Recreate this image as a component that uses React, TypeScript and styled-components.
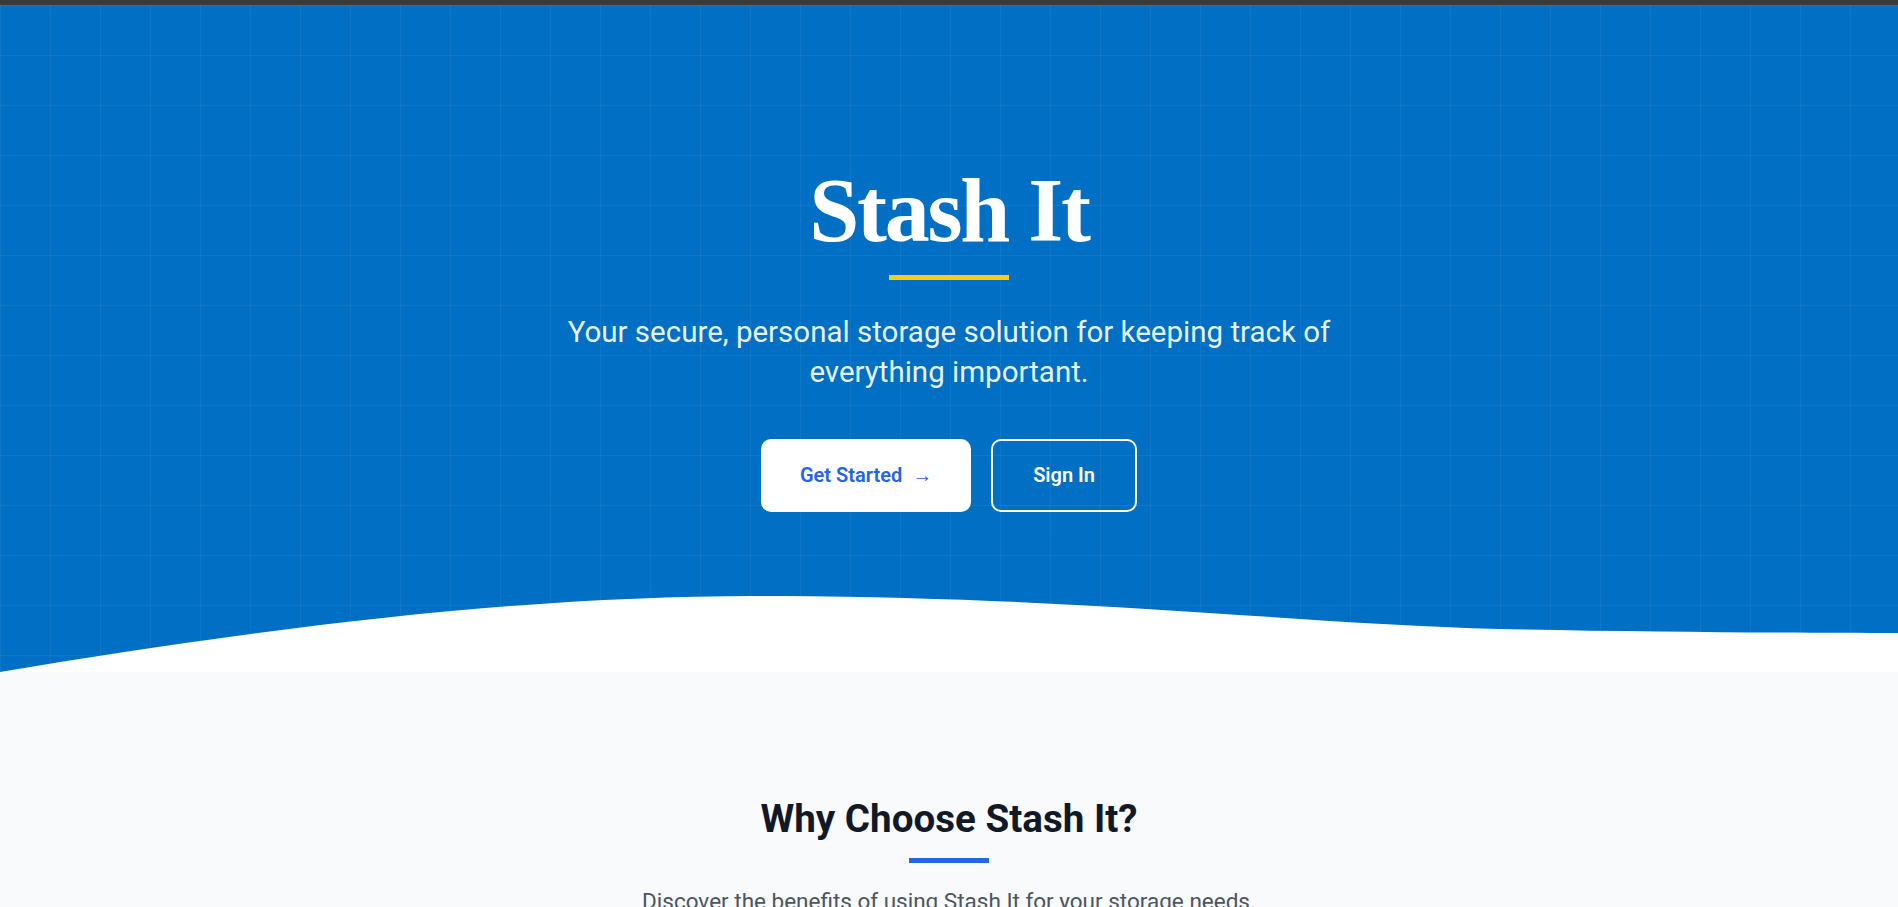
import styled, { createGlobalStyle } from "styled-components"

const GlobalStyle = createGlobalStyle`
    html, body {
        margin: 0;
        padding: 0;
        background: #f9fafb;
        font-family: "Segoe UI", Roboto, "Noto Sans", sans-serif;
    }
    * {
        box-sizing: border-box;
    }
`

const TopBar = styled.div`
    height: 5px;
    background: #3b3b3b;
`

const Hero = styled.section`
    display: flex;
    flex-direction: column;
    align-items: center;
    padding-top: 161px;
    background-color: #016fc4;
    background-image:
        linear-gradient(to right, rgba(255, 255, 255, 0.06) 1px, transparent 1px),
        linear-gradient(to bottom, rgba(255, 255, 255, 0.06) 1px, transparent 1px);
    background-size: 50px 50px;
    color: #fff;
`

const Title = styled.h1`
    margin: 0;
    font-family: "Liberation Serif", "Times New Roman", serif;
    font-weight: 700;
    font-size: 90px;
    line-height: 1;
    letter-spacing: -0.025em;
`

const AccentBar = styled.div<{ $color: string; $width: number }>`
    width: ${p => p.$width}px;
    height: 5px;
    background: ${p => p.$color};
`

const HeroBar = styled(AccentBar)`
    margin-top: 19px;
`

const Tagline = styled.p`
    margin: 32px 0 0 0;
    max-width: 840px;
    text-align: center;
    font-size: 29.5px;
    line-height: 40px;
    color: rgba(255, 255, 255, 0.93);
`

const ButtonRow = styled.div`
    display: flex;
    gap: 20px;
    margin-top: 47px;
`

const BaseButton = styled.a`
    display: inline-flex;
    align-items: center;
    padding: 18px 40px;
    border: 2px solid #fff;
    border-radius: 10px;
    font-size: 20px;
    font-weight: 600;
    line-height: 33px;
    text-decoration: none;
    cursor: pointer;
`

const PrimaryButton = styled(BaseButton)`
    padding: 18px 37px;
    background: #fff;
    color: #2563eb;
`

const OutlineButton = styled(BaseButton)`
    background: transparent;
    color: #fff;
`

const Arrow = styled.span`
    margin-left: 10px;
`

const Wave = styled.svg`
    display: block;
    width: 100%;
    height: 80px;
    margin-top: 80px;
`

const Features = styled.section`
    display: flex;
    flex-direction: column;
    align-items: center;
    padding: 122px 20px 120px;
    background: #f9fafb;
`

const SectionTitle = styled.h2`
    margin: 0;
    font-size: 38.6px;
    font-weight: 700;
    line-height: 50px;
    color: #111827;
`

const SectionBar = styled(AccentBar)`
    margin-top: 14px;
`

const SectionLead = styled.p`
    margin: 22px 0 0 0;
    font-size: 22.5px;
    line-height: 32px;
    color: #4b5563;
    text-align: center;
`

export default function App() {
    return (
        <>
            <GlobalStyle />
            <TopBar />
            <Hero>
                <Title>Stash It</Title>
                <HeroBar $color="#facc15" $width={120} />
                <Tagline>Your secure, personal storage solution for keeping track of everything important.</Tagline>
                <ButtonRow>
                    <PrimaryButton>Get Started<Arrow>→</Arrow></PrimaryButton>
                    <OutlineButton>Sign In</OutlineButton>
                </ButtonRow>
                <Wave viewBox="0 0 1898 80" preserveAspectRatio="none">
                    <path
                        d="M0,80 C300,30 550,2 780,4 C1100,6 1300,32 1500,37 C1650,40 1800,41 1898,41 L1898,80 Z"
                        fill="#ffffff"
                    />
                </Wave>
            </Hero>
            <Features>
                <SectionTitle>Why Choose Stash It?</SectionTitle>
                <SectionBar $color="#2563eb" $width={80} />
                <SectionLead>Discover the benefits of using Stash It for your storage needs.</SectionLead>
            </Features>
        </>
    )
}
